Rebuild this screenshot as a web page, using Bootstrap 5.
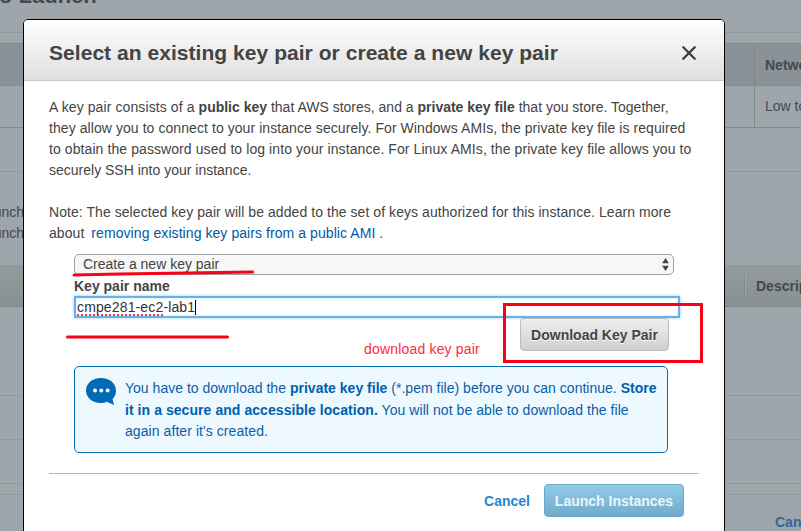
<!DOCTYPE html>
<html lang="en">
<head>
<meta charset="utf-8">
<meta name="viewport" content="width=device-width, initial-scale=1">
<title>Select an existing key pair or create a new key pair</title>
<link href="https://cdn.jsdelivr.net/npm/bootstrap@5.3.0/dist/css/bootstrap.min.css" rel="stylesheet">
<style>
body{font-family:"Liberation Sans",Arial,sans-serif;font-size:14px;line-height:21px;color:#444;background:#9ea5ab;height:531px;overflow:hidden}
/* dimmed wizard page */
.page{height:531px;color:#43494e;display:flow-root}
.page-title{height:33px;border-bottom:1px solid #8f979b;font-size:22px;font-weight:700;line-height:24px;display:flow-root}
.page-title span{display:block;margin-top:-16px;margin-left:-1px}
.type-table{margin-top:10px;border-top:1px solid #82898d}
.type-row{height:42px;border-bottom:1px solid #82898d}
.type-row.head{background:#8b9297;font-weight:700}
.type-row .net{width:47px;border-left:1px solid #82898d;padding-left:10px;white-space:nowrap;overflow:hidden;line-height:42px}
.type-row:not(.head) .net{line-height:40px}
.rule-row{height:44px;border-bottom:1px solid #91999d}
.gap-tall{height:89px}
.gap-thin{height:11px}
.note-rows{height:93px;padding-top:30px}
.note-rows div{width:24px;display:flex;justify-content:flex-end;white-space:nowrap}
.band{height:42px;background:linear-gradient(#929a9c,#889093);border-bottom:1px solid #7d8589;font-weight:700}
.band .desc{width:57px;height:19px;border-left:1px solid #7f878b;box-shadow:inset 1px 0 #a1a8ac;padding-left:11px;line-height:20px;overflow:hidden;white-space:nowrap}
.page-cancel{color:#33669a;font-weight:700;width:26px;padding-top:17px;white-space:nowrap}
/* dialog */
.dialog{position:absolute;left:23px;top:19px;width:702px;height:530px;border:1px solid #000;border-radius:5px 5px 0 0;background:#fff;overflow:hidden}
.dialog-head{height:61px;border-bottom:1px solid #c8c8c8;background:linear-gradient(#fff,#dfdfdf);padding:6px 28px 0 25px}
.dialog-head h1{font-size:21px;font-weight:700;margin:0;color:#444;white-space:nowrap;letter-spacing:.045px}
.dialog-main{padding:16px 25px 0}
.ln{display:block;white-space:nowrap}
.lead-in{letter-spacing:.1px}
.l2{letter-spacing:.07px}
.l3{letter-spacing:.085px}
.l5{letter-spacing:.06px}
.l6{letter-spacing:.07px}
.l6 a{margin-left:3px}
.n1{letter-spacing:.015px}
.n2{letter-spacing:.06px;padding-top:1px}
.n3{letter-spacing:.07px}
.note-text{margin-top:21px}
.dialog a{color:#0058a8;text-decoration:none}
.key-form{padding-left:25px;margin-top:10px}
.key-select{width:600px;height:21px;border:1px solid #a0a0a0;border-radius:5px;background:#f7f7f7;padding:0 4px 0 8px;line-height:19px}
.key-label{font-weight:700;height:21px;line-height:22px}
.key-input{width:606px;height:22px;border:2px solid #67b2e8;box-shadow:0 0 3px #8cc8f2,inset 0 0 2px #b5dcf7;padding-left:1px;line-height:19px;color:#333;letter-spacing:.14px}
.misspelt{text-decoration:underline dotted #f2384a 2px;text-underline-offset:2px;text-decoration-skip-ink:none}
.caret{width:1px;height:15px;background:#000;margin-top:2px}
.btn-key{width:149px;height:33px;border:1px solid #bbb;border-radius:4px;background:linear-gradient(#efefef,#cfcfcf);color:#444;font-weight:700;font-size:14px;padding:2px 0 0;text-shadow:0 1px #fff;white-space:nowrap;margin-right:30px}
.notice{width:594px;height:87px;margin-top:15px;border:1px solid #006fb4;border-radius:5px;background:#edf8ff;color:#0a5ea8;padding:11px 0 0 11px}
.notice b{color:#0060ae}
.foot{margin-top:20px;border-top:1px solid #b8b8b8;padding:10px 15px 0 0}
.foot .cancel{color:#1f86d0;font-weight:700;margin-right:14px;padding-top:2px}
.btn-launch{width:140px;height:33px;border:1px solid #68a7c5;border-radius:4px;background:linear-gradient(#92cbe6,#70abca);color:#eaf6fd;font-weight:700;font-size:14px;padding:2px 0 0;white-space:nowrap}
/* hand-drawn marks */
.marks{position:absolute;left:0;top:0;pointer-events:none}
.mark-text{position:absolute;left:364px;top:339px;color:#fb2c3c;white-space:nowrap;letter-spacing:.18px}
</style>
</head>
<body>
<div class="page">
  <div class="page-title"><span>o Launch</span></div>
  <div class="type-table">
    <div class="type-row head d-flex justify-content-end"><div class="net">Network</div></div>
    <div class="type-row d-flex justify-content-end"><div class="net">Low to</div></div>
  </div>
  <div class="rule-row"></div>
  <div class="note-rows"><div>Launch</div><div>Launch</div></div>
  <div class="band d-flex justify-content-end align-items-center"><div class="desc">Description</div></div>
  <div class="rule-row gap-tall"></div>
  <div class="rule-row"></div>
  <div class="rule-row"></div>
  <div class="rule-row gap-thin"></div>
  <div class="d-flex justify-content-end"><div class="page-cancel">Cancel</div></div>
</div>

<section class="dialog">
  <header class="dialog-head d-flex align-items-center justify-content-between">
    <h1>Select an existing key pair or create a new key pair</h1>
    <svg width="14" height="14" viewBox="0 0 14 14"><path d="M1.300 1.300 12.700 12.700M12.700 1.300 1.300 12.700" stroke="#3c3c3c" stroke-width="2.300" stroke-linecap="round"/></svg>
  </header>
  <div class="dialog-main">
    <p class="m-0">
      <span class="ln"><span class="lead-in">A key pair consists of a </span><b>public key</b> that AWS stores, and a <b>private key file</b> that you store. Together,</span>
      <span class="ln l2">they allow you to connect to your instance securely. For Windows AMIs, the private key file is required</span>
      <span class="ln l3">to obtain the password used to log into your instance. For Linux AMIs, the private key file allows you to</span>
      <span class="ln">securely SSH into your instance.</span>
    </p>
    <p class="note-text mb-0">
      <span class="ln l5">Note: The selected key pair will be added to the set of keys authorized for this instance. Learn more</span>
      <span class="ln l6">about <a href="#">removing existing key pairs from a public AMI</a> .</span>
    </p>
    <div class="key-form">
      <div class="key-select d-flex justify-content-between align-items-center"><span>Create a new key pair</span>
        <svg width="7" height="13" viewBox="0 0 7 13"><path d="M3.500 0 6.900 5.300H.1zM3.500 13 .1 7.700h6.800z" fill="#444"/></svg>
      </div>
      <div class="key-label">Key pair name</div>
      <div class="key-input d-flex"><span><span class="misspelt">cmpe281-ec2</span>-lab1</span><i class="caret"></i></div>
      <div class="d-flex justify-content-end"><div class="btn btn-key d-flex align-items-center justify-content-center">Download Key Pair</div></div>
      <div class="notice d-flex">
        <svg class="flex-shrink-0" width="31" height="28" viewBox="0 0 31 28"><path d="M15 0C23.500 0 30 5.300 30 12.500c0 3.500-1.200 6.300-3.400 8.500L28 27l-7-3.300C19 24.600 17 25 15 25 6.500 25 0 19.700 0 12.500S6.500 0 15 0z" fill="#006ab3"/><g fill="#fff"><circle cx="9" cy="12.500" r="2"/><circle cx="15.300" cy="12.500" r="2"/><circle cx="21.600" cy="12.500" r="2"/></g></svg>
        <div class="ms-2">
          <span class="ln n1">You have to download the <b>private key file</b> (*.pem file) before you can continue. <b>Store</b></span>
          <span class="ln n2"><b>it in a secure and accessible location.</b> You will not be able to download the file</span>
          <span class="ln n3">again after it's created.</span>
        </div>
      </div>
    </div>
    <div class="foot d-flex justify-content-end align-items-center"><a href="#" class="cancel">Cancel</a><div class="btn btn-launch d-flex align-items-center justify-content-center">Launch Instances</div></div>
  </div>
</section>

<svg class="marks" width="801" height="531" fill="none" stroke="#fb0019" stroke-width="3" stroke-linecap="round"><path d="M74 275 120 274 252.500 272M67.500 337H227.500"/><path d="M504.500 304.500H701.500v57H504.500z"/></svg>
<div class="mark-text">download key pair</div>
<script src="https://cdn.jsdelivr.net/npm/bootstrap@5.3.0/dist/js/bootstrap.bundle.min.js"></script>
</body>
</html>
